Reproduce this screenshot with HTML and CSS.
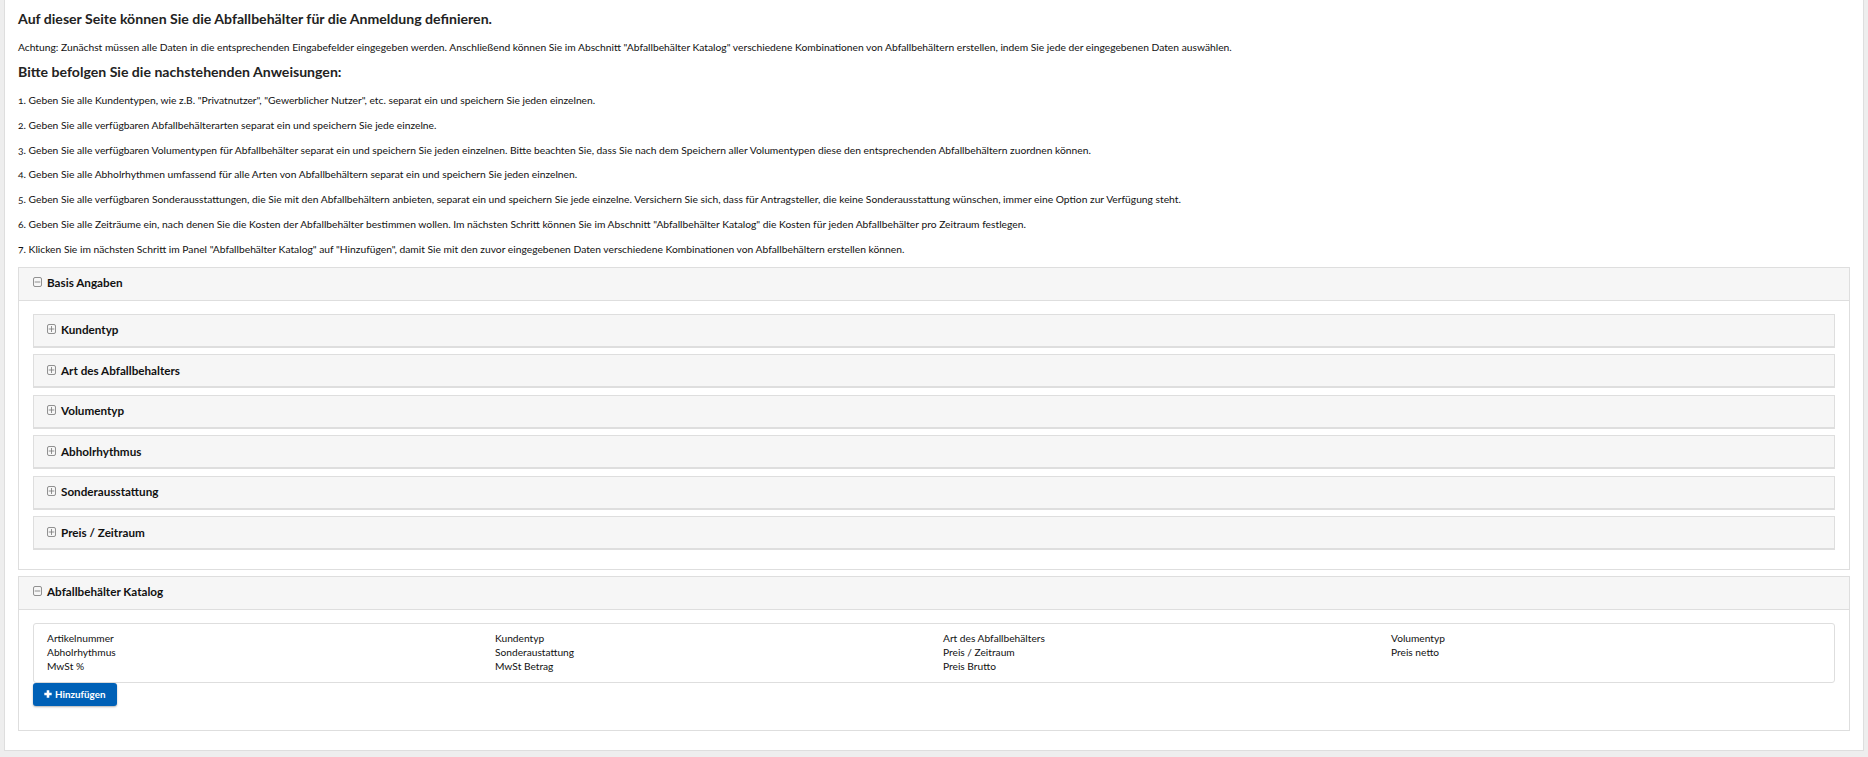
FILE: index.html
```html
<!DOCTYPE html>
<html lang="de">
<head>
<meta charset="utf-8">
<title>Abfallbehälter</title>
<link rel="stylesheet" href="styles.css">
</head>
<body>
<main class="page">
  <h3 class="title">Auf dieser Seite können Sie die Abfallbehälter für die Anmeldung definieren.</h3>
  <p class="note">Achtung: Zunächst müssen alle Daten in die entsprechenden Eingabefelder eingegeben werden. Anschließend können Sie im Abschnitt "Abfallbehälter Katalog" verschiedene Kombinationen von Abfallbehältern erstellen, indem Sie jede der eingegebenen Daten auswählen.</p>
  <h3 class="title second">Bitte befolgen Sie die nachstehenden Anweisungen:</h3>
  <p class="step">1. Geben Sie alle Kundentypen, wie z.B. "Privatnutzer", "Gewerblicher Nutzer", etc. separat ein und speichern Sie jeden einzelnen.</p>
  <p class="step">2. Geben Sie alle verfügbaren Abfallbehälterarten separat ein und speichern Sie jede einzelne.</p>
  <p class="step">3. Geben Sie alle verfügbaren Volumentypen für Abfallbehälter separat ein und speichern Sie jeden einzelnen. Bitte beachten Sie, dass Sie nach dem Speichern aller Volumentypen diese den entsprechenden Abfallbehältern zuordnen können.</p>
  <p class="step">4. Geben Sie alle Abholrhythmen umfassend für alle Arten von Abfallbehältern separat ein und speichern Sie jeden einzelnen.</p>
  <p class="step">5. Geben Sie alle verfügbaren Sonderausstattungen, die Sie mit den Abfallbehältern anbieten, separat ein und speichern Sie jede einzelne. Versichern Sie sich, dass für Antragsteller, die keine Sonderausstattung wünschen, immer eine Option zur Verfügung steht.</p>
  <p class="step">6. Geben Sie alle Zeiträume ein, nach denen Sie die Kosten der Abfallbehälter bestimmen wollen. Im nächsten Schritt können Sie im Abschnitt "Abfallbehälter Katalog" die Kosten für jeden Abfallbehälter pro Zeitraum festlegen.</p>
  <p class="step">7. Klicken Sie im nächsten Schritt im Panel "Abfallbehälter Katalog" auf "Hinzufügen", damit Sie mit den zuvor eingegebenen Daten verschiedene Kombinationen von Abfallbehältern erstellen können.</p>

  <section class="panel">
    <header class="panel-head">
      <svg class="toggle" viewBox="0 0 9 10" aria-hidden="true"><rect x=".5" y=".5" width="8" height="9" rx="1.5"/><path d="M1.7 5h5.6"/></svg>
      <span>Basis Angaben</span>
    </header>
    <div class="panel-body basis">
      <div class="sub"><svg class="toggle" viewBox="0 0 9 10" aria-hidden="true"><rect x=".5" y=".5" width="8" height="9" rx="1.5"/><path d="M1.7 5h5.6M4.5 2v6"/></svg><span>Kundentyp</span></div>
      <div class="sub"><svg class="toggle" viewBox="0 0 9 10" aria-hidden="true"><rect x=".5" y=".5" width="8" height="9" rx="1.5"/><path d="M1.7 5h5.6M4.5 2v6"/></svg><span>Art des Abfallbehalters</span></div>
      <div class="sub"><svg class="toggle" viewBox="0 0 9 10" aria-hidden="true"><rect x=".5" y=".5" width="8" height="9" rx="1.5"/><path d="M1.7 5h5.6M4.5 2v6"/></svg><span>Volumentyp</span></div>
      <div class="sub"><svg class="toggle" viewBox="0 0 9 10" aria-hidden="true"><rect x=".5" y=".5" width="8" height="9" rx="1.5"/><path d="M1.7 5h5.6M4.5 2v6"/></svg><span>Abholrhythmus</span></div>
      <div class="sub"><svg class="toggle" viewBox="0 0 9 10" aria-hidden="true"><rect x=".5" y=".5" width="8" height="9" rx="1.5"/><path d="M1.7 5h5.6M4.5 2v6"/></svg><span>Sonderausstattung</span></div>
      <div class="sub"><svg class="toggle" viewBox="0 0 9 10" aria-hidden="true"><rect x=".5" y=".5" width="8" height="9" rx="1.5"/><path d="M1.7 5h5.6M4.5 2v6"/></svg><span>Preis / Zeitraum</span></div>
    </div>
  </section>

  <section class="panel catalog">
    <header class="panel-head">
      <svg class="toggle" viewBox="0 0 9 10" aria-hidden="true"><rect x=".5" y=".5" width="8" height="9" rx="1.5"/><path d="M1.7 5h5.6"/></svg>
      <span>Abfallbehälter Katalog</span>
    </header>
    <div class="panel-body">
      <div class="grid">
        <span>Artikelnummer</span><span>Kundentyp</span><span>Art des Abfallbehälters</span><span>Volumentyp</span>
        <span>Abholrhythmus</span><span>Sonderaustattung</span><span>Preis / Zeitraum</span><span>Preis netto</span>
        <span>MwSt %</span><span>MwSt Betrag</span><span>Preis Brutto</span><span></span>
      </div>
      <button class="add" type="button"><svg viewBox="0 0 10 10" aria-hidden="true"><path d="M3.4 .4h3.2v3h3v3.2h-3v3H3.4v-3h-3V3.4h3z"/></svg>Hinzufügen</button>
    </div>
  </section>
</main>
</body>
</html>
```
FILE: styles.css
```css
* { box-sizing: border-box; }
html, body { height: 100%; }
body {
  margin: 0;
  background: #eeeeee;
  color: #111;
  font-family: "Lato", "Liberation Sans", sans-serif;
  font-variant-numeric: oldstyle-nums;
  overflow: hidden;
}
.page {
  margin-left: 4px;
  width: 1860px;
  height: 751px;
  padding: 10px 13px 0 13px;
  background: #fff;
  border: 1px solid #dedede;
  border-width: 0 1px 1px 1px;
}
.title {
  margin: 0;
  font-size: 14.1px;
  line-height: 18px;
  font-weight: 700;
  color: #222;
}
.second { margin-top: 9px; }
.note {
  margin: 12px 0 0;
  font-size: 10.28px;
  line-height: 14px;
}
.step {
  margin: 10px 0 0;
  font-size: 10.28px;
  line-height: 14.8px;
}
.title + .step { margin-top: 12px; }
.panel {
  margin-top: 10px;
  border: 1px solid #dedede;
  width: 1832px;
}
.catalog { margin-top: 6px; height: 155px; }
.panel-head {
  display: flex;
  align-items: center;
  gap: 5px;
  height: 33px;
  padding: 0 14px 3px;
  background: #f6f6f6;
  border-bottom: 1px solid #dedede;
  font-size: 11.7px;
  font-weight: 700;
}
.toggle {
  width: 9px;
  height: 10px;
  flex: none;
  fill: none;
  stroke: #777;
  stroke-width: .8;
}
.panel-body { padding: 13px 14px 20px; }
.basis {
  display: flex;
  flex-direction: column;
  gap: 6.5px;
  padding-bottom: 18.5px;
}
.sub {
  display: flex;
  align-items: center;
  gap: 5px;
  height: 34px;
  padding: 0 13px 2px;
  background: #f6f6f6;
  border: 1px solid #dedede;
  border-bottom-width: 2px;
  font-size: 11.7px;
  font-weight: 700;
}
.grid {
  display: grid;
  grid-template-columns: 448px 448px 448px 1fr;
  align-content: start;
  padding: 7px 12px 6px 13px;
  height: 60px;
  border: 1px solid #dedede;
  border-radius: 3px;
  font-size: 10.2px;
  line-height: 14px;
}
.add {
  display: flex;
  align-items: center;
  gap: 3px;
  height: 23px;
  width: 84px;
  padding: 0 0 0 11px;
  border: 0;
  border-radius: 3px;
  background: #0061b7;
  box-shadow: 0 1px 2px rgba(0,0,0,.3);
  color: #fff;
  font-family: inherit;
  font-size: 9.8px;
  font-weight: 700;
}
.add svg { width: 8px; height: 8px; fill: #fff; }
```
